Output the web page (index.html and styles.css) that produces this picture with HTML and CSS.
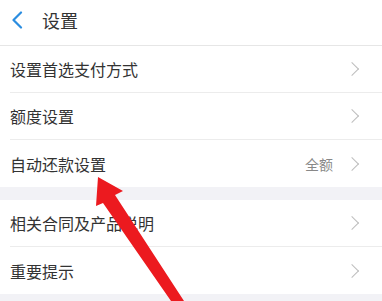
FILE: index.html
```html
<!DOCTYPE html>
<html lang="zh">
<head>
<meta charset="utf-8">
<link rel="stylesheet" href="styles.css">
</head>
<body>
<div class="page">
  <header class="header">
    <svg class="back" width="12" height="18" viewBox="0 0 12 18"><path d="M10 1.5 L2.5 9 L10 16.5" fill="none" stroke="#2b8de0" stroke-width="2.2" stroke-linecap="round" stroke-linejoin="round"/></svg>
    <span class="title">设置</span>
  </header>
  <section class="group">
    <div class="row"><span class="label">设置首选支付方式</span><span class="chev"></span></div>
    <div class="row"><span class="label">额度设置</span><span class="chev"></span></div>
    <div class="row last"><span class="label">自动还款设置</span><span class="value">全额</span><span class="chev"></span></div>
  </section>
  <div class="gap"></div>
  <section class="group">
    <div class="row"><span class="label">相关合同及产品说明</span><span class="chev"></span></div>
    <div class="row last"><span class="label">重要提示</span><span class="chev"></span></div>
  </section>
  <div class="gap"></div>
  <svg class="arrow" width="382" height="301" viewBox="0 0 382 301"><polygon points="98,177 123,191 115,195 184,301 171,301 103,203 96,206" fill="#ec1a1f"/></svg>
</div>
</body>
</html>
```
FILE: styles.css
```css
html, body { margin: 0; padding: 0; background: #fff; }
body { font-family: "Noto Sans CJK SC", "Noto Sans", sans-serif; color: #333; }
.page { position: relative; width: 382px; height: 301px; overflow: hidden; background: #f2f2f6; }
.header { height: 46px; box-sizing: border-box; display: flex; align-items: center; padding: 0 0 6px 11px; background: #fff; border-bottom: 1px solid #e6e6e6; }
.back { margin-right: 19px; }
.title { font-size: 18px; color: #333; line-height: 1; }
.group { background: #fff; }
.row { height: 47px; box-sizing: border-box; display: flex; align-items: center; margin-left: 10px; padding-right: 23px; border-bottom: 1px solid #ececec; }
.row.last { border-bottom: none; }
.label { flex: 1; font-size: 16px; color: #333; }
.value { font-size: 14px; color: #888; margin-right: 14px; }
.chev { width: 9px; height: 9px; border-top: 1.5px solid #bdbdbd; border-right: 1.5px solid #bdbdbd; transform: rotate(45deg); margin-right: 2px; }
.gap { height: 13px; }
.arrow { position: absolute; left: 0; top: 0; }
```
